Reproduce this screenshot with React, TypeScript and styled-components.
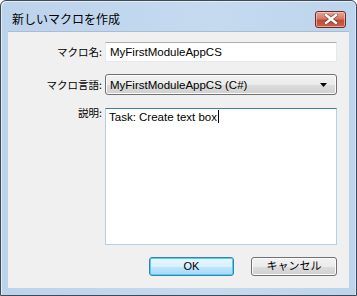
import styled, { createGlobalStyle } from 'styled-components';

const GlobalStyle = createGlobalStyle`
  html, body {
    margin: 0;
    padding: 0;
    background: #ffffff;
  }
  body {
    font-family: 'Liberation Sans', 'Noto Sans CJK JP', sans-serif;
    font-size: 11px;
    color: #000;
  }
`;

function CloseIcon() {
  return (
    <svg width="14" height="10" viewBox="0 0 14 10">
      <path
        d="M2 1 L12 9 M12 1 L2 9"
        stroke="#5a2020"
        strokeWidth="4"
        strokeLinecap="square"
        opacity="0.55"
      />
      <path
        d="M2 1 L12 9 M12 1 L2 9"
        stroke="#ffffff"
        strokeWidth="2.4"
        strokeLinecap="square"
      />
    </svg>
  );
}

function ArrowDown() {
  return (
    <svg width="7" height="4" viewBox="0 0 7 4">
      <path d="M0 0 H7 L3.5 4 Z" fill="#000" />
    </svg>
  );
}

function App() {
  return (
    <>
      <GlobalStyle />
      <Window>
        <TitleBar>
          <Title>新しいマクロを作成</Title>
          <CloseButton>
            <CloseIcon />
          </CloseButton>
        </TitleBar>
        <Client>
          <Form>
            <Label>マクロ名:</Label>
            <TextBox>MyFirstModuleAppCS</TextBox>

            <Label>マクロ言語:</Label>
            <Select>
              <span>MyFirstModuleAppCS (C#)</span>
              <ArrowDown />
            </Select>

            <Label $top>説明:</Label>
            <TextArea>
              Task: Create text box
              <Caret />
            </TextArea>
          </Form>
          <ButtonRow>
            <Button $primary>OK</Button>
            <Button>キャンセル</Button>
          </ButtonRow>
        </Client>
      </Window>
    </>
  );
}

const Window = styled.div`
  box-sizing: border-box;
  width: 357px;
  height: 296px;
  border: 1px solid #3f4a56;
  border-radius: 6px 6px 0 0;
  background: linear-gradient(90deg, #bcd3ec 0%, #c5daef 60%, #bcd4ec 100%);
  box-shadow: inset 1px 1px 0 #e4eef9, inset -1px 0 0 #d6e5f5;
  display: flex;
  flex-direction: column;
  padding: 0 7px 7px 7px;
  overflow: hidden;
`;

const TitleBar = styled.div`
  height: 30px;
  display: flex;
  align-items: center;
  justify-content: space-between;
  padding: 0 3px 0 4px;
`;

const Title = styled.span`
  font-family: 'Noto Sans CJK JP', sans-serif;
  font-size: 12px;
  line-height: 14px;
  color: #000;
  margin-top: 5px;
`;

const CloseButton = styled.div`
  box-sizing: border-box;
  width: 31px;
  height: 17px;
  margin-top: 6px;
  border: 1px solid #6d2a2a;
  border-radius: 3px;
  background: linear-gradient(180deg, #e6a595 0%, #d37a6a 45%, #c04a36 55%, #c9614d 100%);
  box-shadow: inset 0 0 0 1px rgba(255, 220, 210, 0.55);
  display: flex;
  align-items: center;
  justify-content: center;
`;

const Client = styled.div`
  flex: 1;
  background: #f0f0f0;
  border-top: 1px solid #a9bcd2;
  padding: 10px 12px 11px 0;
  display: flex;
  flex-direction: column;
  gap: 13px;
`;

const Form = styled.div`
  display: grid;
  grid-template-columns: 93px 232px;
  grid-template-rows: 20px 21px 137px;
  column-gap: 3px;
  row-gap: 12px;
  justify-content: end;
  & > :nth-child(n + 5) {
    margin-top: 1px;
  }
`;

const Label = styled.div<{ $top?: boolean }>`
  font-family: 'Noto Sans CJK JP', sans-serif;
  font-size: 10.5px;
  line-height: 14px;
  text-align: right;
  align-self: ${({ $top }) => ($top ? 'start' : 'center')};
  margin-top: ${({ $top }) => ($top ? '-1px !important' : '0')};
  white-space: nowrap;
`;

const TextBox = styled.div`
  box-sizing: border-box;
  height: 20px;
  background: #fff;
  border: 1px solid #e3e9ef;
  border-top-color: #abadb3;
  padding: 0 4px;
  display: flex;
  align-items: center;
  font-size: 11.5px;
`;

const Select = styled.div`
  box-sizing: border-box;
  height: 21px;
  border: 1px solid #707070;
  border-radius: 3px;
  background: linear-gradient(180deg, #f2f2f2 0%, #ebebeb 50%, #dddddd 51%, #cfcfcf 100%);
  box-shadow: inset 0 0 0 1px #fcfcfc;
  padding: 0 9px 0 4px;
  display: flex;
  align-items: center;
  justify-content: space-between;
  font-size: 11.5px;
`;

const TextArea = styled.div`
  box-sizing: border-box;
  height: 137px;
  background: #fff;
  border: 1px solid #b5cfe7;
  border-top-color: #3d7bad;
  padding: 1px 3px;
  font-size: 11.5px;
  line-height: 14px;
  display: flex;
  align-items: flex-start;
`;

const Caret = styled.span`
  display: inline-block;
  width: 1px;
  height: 13px;
  margin-left: 1px;
  background: #000;
`;

const ButtonRow = styled.div`
  display: flex;
  justify-content: flex-end;
  gap: 17px;
`;

const Button = styled.div<{ $primary?: boolean }>`
  box-sizing: border-box;
  width: ${({ $primary }) => ($primary ? '85px' : '86px')};
  height: 19px;
  border: 1px solid ${({ $primary }) => ($primary ? '#3c7fb1' : '#707070')};
  border-radius: 3px;
  background: ${({ $primary }) =>
    $primary
      ? 'linear-gradient(180deg, #eaf6fd 0%, #d9f0fc 50%, #bee6fd 51%, #a7d9f5 100%)'
      : 'linear-gradient(180deg, #f2f2f2 0%, #ebebeb 50%, #dddddd 51%, #cfcfcf 100%)'};
  box-shadow: ${({ $primary }) =>
    $primary ? 'inset 0 0 0 1px #48d3f7' : 'inset 0 0 0 1px #fcfcfc'};
  display: flex;
  align-items: center;
  justify-content: center;
  font-family: 'Liberation Sans', 'Noto Sans CJK JP', sans-serif;
  font-size: 11px;
  line-height: 13px;
`;

export default App;
